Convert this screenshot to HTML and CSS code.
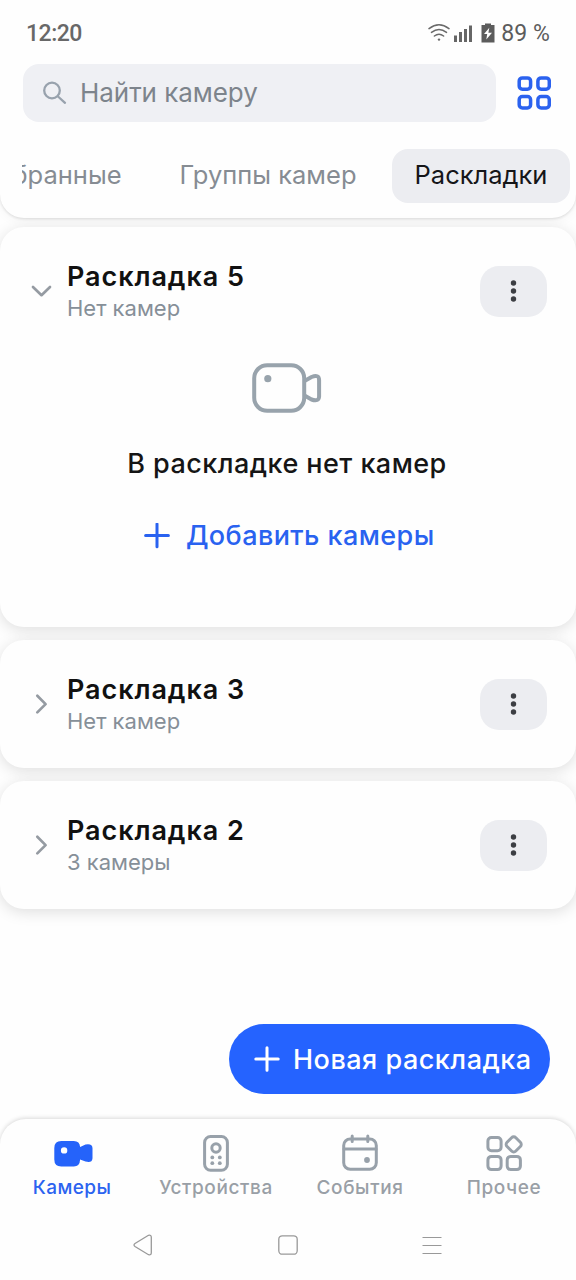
FILE: index.html
```html
<!DOCTYPE html>
<html lang="ru">
<head>
<meta charset="utf-8">
<title>Камеры</title>
<link rel="stylesheet" href="styles.css">
</head>
<body>
<div class="screen">
  <header class="header">
    <div class="status">
      <span class="clock">12:20</span>
      <div class="status-icons">
        <svg class="wifi" width="22" height="18" viewBox="0 0 22 18" fill="none" stroke="#6a6a6a" stroke-width="1.5" stroke-linecap="round"><path d="M1 4.6Q11-3 21 4.6M3.500 8.400Q11 2.600 18.500 8.400M6.400 12Q11 8.600 15.600 12"/><circle cx="11" cy="15.600" r="1.200" fill="#6a6a6a" stroke="none"/></svg>
        <svg class="signal" width="19" height="17" viewBox="0 0 19 17" fill="#666"><path d="M0 10.500h3V17H0zM5 7h3v10H5zM10 4h3v13h-3zM15 .5h3V17h-3z"/></svg>
        <svg class="battery" width="14" height="20" viewBox="0 0 14 20"><path d="M.5 2H4V.5h6V2h3.500v17.500H.5z" fill="#5c5c5c"/><path d="M8.300 4.800 3 11h3.200l-.9 5.500L11 9.800H7.400z" fill="#fff"/></svg>
        <span class="percent">89 %</span>
      </div>
    </div>
    <div class="search-row">
      <div class="search">
        <svg width="24" height="24" viewBox="0 0 24 24" fill="none" stroke="#98a2ad" stroke-width="2.300" stroke-linecap="round"><circle cx="9" cy="9.500" r="7.800"/><path d="m15 15.500 7 6.300"/></svg>
        <span class="search-text">Найти камеру</span>
      </div>
      <svg class="grid-icon" width="34" height="34" viewBox="0 0 34 34" fill="none" stroke="#2b62ef" stroke-width="3.500"><rect x="2.200" y="1.900" width="11.400" height="11.400" rx="3.200"/><rect x="20.900" y="1.900" width="11.400" height="11.400" rx="3.200"/><rect x="2.200" y="20.600" width="11.400" height="11.400" rx="3.200"/><rect x="20.900" y="20.600" width="11.400" height="11.400" rx="3.200"/></svg>
    </div>
    <nav class="tabs">
      <span class="tab tab-first">Избранные</span>
      <span class="tab tab-groups">Группы камер</span>
      <span class="tab tab-active">Раскладки</span>
    </nav>
  </header>

  <main class="list">
    <section class="card card-open">
      <div class="card-head">
        <svg class="chevron" width="22" height="22" viewBox="0 0 22 22" fill="none" stroke="#959ba2" stroke-width="2.700" stroke-linecap="round" stroke-linejoin="round"><path d="m3 7 8.500 8.200L20 7"/></svg>
        <div class="card-text"><div class="title">Раскладка 5</div><div class="subtitle">Нет камер</div></div>
        <div class="more"><svg width="8" height="24" viewBox="0 0 8 24" fill="#3c3e43"><circle cx="3.500" cy="4" r="2.700"/><circle cx="3.500" cy="12" r="2.700"/><circle cx="3.500" cy="20" r="2.700"/></svg></div>
      </div>
      <svg class="empty-icon" width="70" height="50" viewBox="0 0 70 50" fill="none" stroke="#98a3ac" stroke-width="4"><rect x="2.200" y="2.200" width="50" height="45.600" rx="13"/><circle cx="15.800" cy="15.700" r="3.600" fill="#98a3ac" stroke="none"/><path d="m52.500 18 7-4q7.600-3 7.600 3v16.500q-.2 5.500-7.600 3l-7-4" stroke-linejoin="round"/></svg>
      <div class="empty-text">В раскладке нет камер</div>
      <div class="add">
        <svg width="26" height="26" viewBox="0 0 26 26" stroke="#2962f0" stroke-width="3" stroke-linecap="round"><path d="M13 1v22.800M1.600 12.400h22.800"/></svg>
        <span>Добавить камеры</span>
      </div>
    </section>
    <section class="card">
      <div class="card-head">
        <svg class="chevron" width="22" height="22" viewBox="0 0 22 22" fill="none" stroke="#959ba2" stroke-width="2.700" stroke-linecap="round" stroke-linejoin="round"><path d="m7.300 2.800 8.300 8.300-8.300 8.300"/></svg>
        <div class="card-text"><div class="title">Раскладка 3</div><div class="subtitle">Нет камер</div></div>
        <div class="more"><svg width="8" height="24" viewBox="0 0 8 24" fill="#3c3e43"><circle cx="3.500" cy="4" r="2.700"/><circle cx="3.500" cy="12" r="2.700"/><circle cx="3.500" cy="20" r="2.700"/></svg></div>
      </div>
    </section>
    <section class="card">
      <div class="card-head">
        <svg class="chevron" width="22" height="22" viewBox="0 0 22 22" fill="none" stroke="#959ba2" stroke-width="2.700" stroke-linecap="round" stroke-linejoin="round"><path d="m7.300 2.800 8.300 8.300-8.300 8.300"/></svg>
        <div class="card-text"><div class="title">Раскладка 2</div><div class="subtitle">3 камеры</div></div>
        <div class="more"><svg width="8" height="24" viewBox="0 0 8 24" fill="#3c3e43"><circle cx="3.500" cy="4" r="2.700"/><circle cx="3.500" cy="12" r="2.700"/><circle cx="3.500" cy="20" r="2.700"/></svg></div>
      </div>
    </section>
    <div class="fab">
      <svg width="26" height="26" viewBox="0 0 26 26" stroke="#fff" stroke-width="3" stroke-linecap="round"><path d="M13 1.800v22.400M1.800 13h22.400"/></svg>
      <span>Новая раскладка</span>
    </div>
  </main>

  <footer class="footer">
    <nav class="bottom-nav">
      <div class="item item-active">
        <svg width="42" height="40" viewBox="0 0 42 40" fill="#2563fa"><path fill-rule="evenodd" d="M10.300 7h12.500q6 0 6.300 6l5.400-2.400q7-1.200 7 3.700v9.900q-.4 5.200-7 3.400l-5.400-2.200q-.3 7-6.300 7H10.300q-7 0-7-7V14q0-7 7-7zm2.800 6.200a3.200 3.200 0 1 0 .01 6.400 3.200 3.200 0 0 0-.01-6.400z"/></svg>
        <span>Камеры</span>
      </div>
      <div class="item">
        <svg width="40" height="40" viewBox="0 0 40 40" fill="none" stroke="#98a1aa" stroke-width="3"><rect x="8.600" y="2.500" width="22.800" height="33.800" rx="6"/><circle cx="20" cy="14" r="4.200" stroke-width="3"/><g fill="#98a1aa" stroke="none"><circle cx="16.300" cy="23.400" r="1.900"/><circle cx="23.800" cy="23.400" r="1.900"/><circle cx="16.300" cy="29.200" r="1.900"/><circle cx="23.800" cy="29.200" r="1.900"/></g></svg>
        <span>Устройства</span>
      </div>
      <div class="item">
        <svg width="40" height="40" viewBox="0 0 40 40" fill="none" stroke="#98a1aa" stroke-width="3" stroke-linecap="round"><rect x="3.700" y="5" width="32.600" height="30.300" rx="6.500"/><path d="M12.200 2v5.500M27.800 2v5.500M4 15.100h32"/><circle cx="27" cy="26" r="2.900" fill="#98a1aa" stroke="none"/></svg>
        <span>События</span>
      </div>
      <div class="item">
        <svg width="40" height="40" viewBox="0 0 40 40" fill="none" stroke="#98a1aa" stroke-width="3"><rect x="3.900" y="3.500" width="13.200" height="13.200" rx="3.500"/><rect x="3.900" y="22.400" width="13.200" height="13.200" rx="3.500"/><rect x="23.200" y="22.400" width="13.200" height="13.200" rx="3.500"/><rect x="23.500" y="4.200" width="12.400" height="12.400" rx="3" transform="rotate(45 29.700 10.400)"/></svg>
        <span>Прочее</span>
      </div>
    </nav>
    <div class="system-nav">
      <svg width="22" height="22" viewBox="0 0 22 22" fill="none" stroke="#999" stroke-width="1.300"><path d="M15.500 1.300 2 9.500q-2 1.500 0 3L15.500 20.700q2.800.6 2.800-2V3.300q0-2.600-2.800-2z"/></svg>
      <svg width="22" height="22" viewBox="0 0 22 22" fill="none" stroke="#999" stroke-width="1.300"><rect x="1.800" y="1.800" width="18.400" height="18.400" rx="3.500"/></svg>
      <svg width="22" height="22" viewBox="0 0 22 22" fill="none" stroke="#999" stroke-width="1.100"><path d="M1.500 3.500h19M1.500 11.500h19M1.500 19.500h19"/></svg>
    </div>
  </footer>
</div>
</body>
</html>
```
FILE: styles.css
```css
* { box-sizing: border-box; }
body { margin: 0; background: #fff; font-family: Inter, "Liberation Sans", sans-serif; }
svg { display: block; flex: none; }
span, .title, .subtitle, .empty-text { white-space: nowrap; }

.screen { width: 576px; height: 1280px; overflow: hidden; display: flex; flex-direction: column; background: #fefefe; }

.header { height: 218px; flex: none; background: #fefefe; border-radius: 0 0 24px 24px; box-shadow: 0 1px 3px rgba(0,0,0,.12), 0 3px 12px rgba(0,0,0,.04); }
.status { height: 64px; padding: 2px 26px 0; display: flex; align-items: center; justify-content: space-between; font-family: Roboto, sans-serif; font-size: 23px; font-weight: 500; color: #686868; }
.clock { letter-spacing: -.5px; }
.percent { font-weight: 400; color: #5c5c5c; letter-spacing: .1px; }
.status-icons { display: flex; align-items: center; }
.wifi { margin-right: 4px; }
.signal { margin-right: 8px; }
.battery { margin-right: 6px; }

.search-row { display: flex; align-items: center; padding: 0 25px 0 22.5px; justify-content: space-between; }
.search { width: 473.5px; height: 57.5px; border-radius: 16px; background: #eff0f4; display: flex; align-items: center; padding-left: 20.5px; gap: 13px; }
.search-text { font-size: 26px; line-height: 32px; letter-spacing: -.05px; color: #7d848c; }

.tabs { height: 54px; margin: 27.5px 6px 0 22px; display: flex; justify-content: flex-end; overflow: hidden; }
.tab { flex: none; height: 54px; line-height: 52px; font-size: 25.5px; color: #868c93; }
.tab-first { margin-right: 58px; }
.tab-groups { margin-right: 35.5px; }
.tab-active { width: 178px; text-align: center; background: #ecedf1; color: #151619; border-radius: 16px; }

.list { flex: 1; display: flex; flex-direction: column; padding-top: 9px; gap: 13px; }
.card { height: 128px; flex: none; background: #fefefe; border-radius: 24px; box-shadow: 0 3px 15px rgba(0,0,0,.13); }
.card-open { height: 400px; display: flex; flex-direction: column; align-items: center; }
.card-head { width: 100%; height: 128px; padding: 0 29px 0 30px; display: flex; align-items: center; }
.card-text { margin-left: 15px; flex: 1; padding-top: 1px; }
.title { font-size: 27px; line-height: 34px; font-weight: 600; letter-spacing: .92px; color: #111; }
.subtitle { font-size: 22px; line-height: 29px; color: #868f98; }
.more { width: 67px; height: 51px; border-radius: 19px; background: #ecedf1; display: flex; align-items: center; justify-content: center; }
.empty-icon { margin-top: 8px; margin-left: -3px; }
.empty-text { margin-top: 34px; margin-left: -2px; line-height: 34px; font-size: 27px; font-weight: 500; letter-spacing: .45px; color: #151515; }
.add { margin-top: 38px; margin-left: 3px; display: flex; align-items: center; gap: 15.5px; font-size: 27px; line-height: 34px; font-weight: 500; letter-spacing: .42px; color: #2962f0; }

.fab { margin-top: auto; margin-right: 26px; margin-bottom: 25px; align-self: flex-end; width: 321px; height: 70px; border-radius: 35px; background: #2563ff; color: #fff; display: flex; align-items: center; padding-left: 25px; gap: 13px; font-size: 27px; font-weight: 500; letter-spacing: .5px; }

.footer { height: 161px; flex: none; background: #fefefe; border-radius: 26px 26px 0 0; box-shadow: 0 -1px 4px rgba(0,0,0,.15); }
.bottom-nav { display: grid; grid-template-columns: repeat(4, 1fr); padding-top: 15px; }
.item { display: flex; flex-direction: column; align-items: center; color: #999fa6; font-size: 19px; line-height: 28px; font-weight: 500; letter-spacing: .6px; }
.item-active { color: #2b63f0; letter-spacing: .4px; }
.system-nav { display: grid; grid-template-columns: repeat(3, 144px); justify-content: center; justify-items: center; padding-top: 32px; }
```
